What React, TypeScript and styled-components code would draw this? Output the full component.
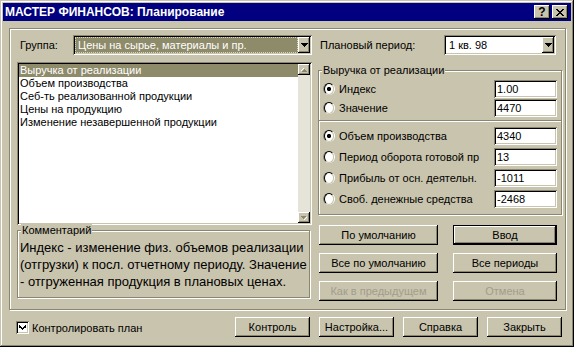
import React from 'react'
import styled, { createGlobalStyle, css } from 'styled-components'

const C = {
  face: '#c9c4ad',
  shadow: '#8a8672',
  white: '#ffffff',
  black: '#000000',
  select: '#8e8b6b',
  track: '#e6e3d9',
  disabled: '#a19d8c',
  title: '#000080',
}

const GlobalStyle = createGlobalStyle`
  html, body {
    margin: 0;
    padding: 0;
    background: ${C.face};
  }
  body {
    font-family: "Liberation Sans", Arial, sans-serif;
    font-size: 11px;
    color: #000;
  }
  * {
    box-sizing: border-box;
  }
`

const raised = css`
  background: ${C.face};
  box-shadow: inset -1px -1px ${C.black}, inset 1px 1px ${C.white},
    inset -2px -2px ${C.shadow}, inset 2px 2px ${C.face};
`

const sunken = css`
  box-shadow: inset 1px 1px ${C.shadow}, inset -1px -1px ${C.white},
    inset 2px 2px ${C.black}, inset -2px -2px ${C.face};
`

const etched = css`
  border: 1px solid ${C.shadow};
  box-shadow: inset 1px 1px ${C.white}, 1px 1px ${C.white};
`

const Dialog = styled.div`
  width: 574px;
  height: 347px;
  padding: 3px;
  background: ${C.face};
  box-shadow: inset -1px -1px ${C.black}, inset 1px 1px ${C.face},
    inset -2px -2px ${C.shadow}, inset 2px 2px ${C.white};
  display: flex;
  flex-direction: column;
`

const TitleBar = styled.div`
  height: 18px;
  display: flex;
  align-items: center;
  justify-content: space-between;
  padding: 0 3px 0 2px;
  background: ${C.title};
  color: #fff;
  font-size: 12px;
  font-weight: bold;
`

const TitleButtons = styled.div`
  display: flex;
  gap: 2px;
`

const TitleButton = styled.div`
  width: 16px;
  height: 14px;
  ${raised};
  display: flex;
  align-items: center;
  justify-content: center;
  color: #000;
  font-size: 12px;
  font-weight: bold;
  line-height: 14px;
`

const Frame = styled.div`
  margin: 7px 5px 0 6px;
  height: 282px;
  ${etched};
  padding: 6px 3px 0 7px;
  display: flex;
  gap: 6px;
`

const Column = styled.div<{ $width: number }>`
  width: ${(p) => p.$width}px;
  display: flex;
  flex-direction: column;
`

const FieldRow = styled.div`
  height: 20px;
  display: flex;
  align-items: center;
`

const FieldLabel = styled.span<{ $width: number; $pad: number }>`
  width: ${(p) => p.$width}px;
  padding-left: ${(p) => p.$pad}px;
  white-space: nowrap;
`

const ComboBox = styled.div<{ $width: number }>`
  width: ${(p) => p.$width}px;
  height: 20px;
  padding: 2px;
  background: ${C.white};
  ${sunken};
  display: flex;
`

const ComboText = styled.div<{ $selected?: boolean }>`
  flex: 1;
  display: flex;
  align-items: center;
  padding-left: 2px;
  white-space: nowrap;
  overflow: hidden;
  background: ${(p) => (p.$selected ? C.select : C.white)};
  color: ${(p) => (p.$selected ? C.white : C.black)};
  border: 1px dotted ${(p) => (p.$selected ? '#d8d4c2' : 'transparent')};
`

const DropButton = styled.div`
  width: 12px;
  ${raised};
  display: flex;
  align-items: center;
  justify-content: center;
`

const ListBox = styled.div`
  margin-top: 7px;
  height: 163px;
  padding: 2px;
  background: ${C.white};
  ${sunken};
  display: flex;
`

const ListItems = styled.div`
  flex: 1;
`

const ListItem = styled.div<{ $selected?: boolean }>`
  height: 13px;
  line-height: 13px;
  padding-left: 1px;
  white-space: nowrap;
  background: ${(p) => (p.$selected ? C.select : 'transparent')};
  color: ${(p) => (p.$selected ? C.white : C.black)};
`

const ScrollBar = styled.div`
  width: 12px;
  display: flex;
  flex-direction: column;
  justify-content: space-between;
  background: ${C.track};
`

const ScrollArrow = styled.div`
  height: 11px;
  ${raised};
  display: flex;
  align-items: center;
  justify-content: center;
`

const GroupBox = styled.div<{ $height: number; $width: number; $top: number }>`
  position: relative;
  margin-top: ${(p) => p.$top}px;
  width: ${(p) => p.$width}px;
  height: ${(p) => p.$height}px;
  ${etched};
`

const Legend = styled.span`
  position: absolute;
  top: -7px;
  left: 3px;
  padding: 0 1px;
  line-height: 13px;
  background: ${C.face};
  white-space: nowrap;
`

const GroupInner = styled.div`
  padding: 9px 4px 0 4px;
  display: flex;
  flex-direction: column;
`

const RadioList = styled.div<{ $gap: number }>`
  display: flex;
  flex-direction: column;
  gap: ${(p) => p.$gap}px;
`

const OptionRow = styled.div`
  height: 18px;
  display: flex;
  align-items: center;
`

const RadioMark = styled.span<{ $checked?: boolean }>`
  flex: none;
  width: 12px;
  height: 12px;
  border-radius: 50%;
  border: 1px solid;
  border-color: ${C.shadow} ${C.white} ${C.white} ${C.shadow};
  display: flex;
  align-items: center;
  justify-content: center;

  &::before {
    content: '';
    width: 10px;
    height: 10px;
    border-radius: 50%;
    border: 1px solid;
    border-color: ${C.black} ${C.face} ${C.face} ${C.black};
    background: ${(p) =>
      p.$checked
        ? `radial-gradient(circle, #000 0 1.8px, #fff 2.4px)`
        : '#fff'};
  }
`

const OptionLabel = styled.span`
  margin-left: 4px;
  white-space: nowrap;
`

const ValueField = styled.input`
  margin-left: auto;
  width: 63px;
  height: 18px;
  border: none;
  outline: none;
  padding: 0 0 0 3px;
  font: 11px "Liberation Sans", Arial, sans-serif;
  color: #000;
  background: ${C.white};
  ${sunken};
`

const Divider = styled.div`
  margin: 3px -4px 5px;
  height: 2px;
  border-top: 1px solid ${C.shadow};
  border-bottom: 1px solid ${C.white};
`

const CommentText = styled.div`
  padding: 8px 2px 0 2px;
  font-size: 13px;
  line-height: 17px;
  white-space: nowrap;
`

const ButtonGrid = styled.div`
  margin-top: 10px;
  padding-left: 1px;
  display: grid;
  grid-template-columns: 119px 104px;
  column-gap: 15px;
  row-gap: 8px;
`

const PushButton = styled.button<{ $default?: boolean; $width?: number }>`
  width: ${(p) => (p.$width ? `${p.$width}px` : 'auto')};
  height: 20px;
  border: none;
  padding: 0;
  font: 11px "Liberation Sans", Arial, sans-serif;
  color: #000;
  ${raised};
  ${(p) =>
    p.$default &&
    css`
      box-shadow: inset 0 0 0 1px ${C.black}, inset -2px -2px ${C.black},
        inset 2px 2px ${C.white}, inset -3px -3px ${C.shadow};
    `}

  &:disabled {
    color: ${C.disabled};
  }
`

const Footer = styled.div`
  margin-top: 7px;
  height: 21px;
  padding: 0 9px 0 13px;
  display: flex;
  align-items: center;
`

const CheckBox = styled.span`
  width: 13px;
  height: 13px;
  background: ${C.white};
  ${sunken};
  display: flex;
  align-items: center;
  justify-content: center;
`

const CheckLabel = styled.span`
  margin-left: 3px;
`

const FooterButtons = styled.div`
  margin-left: auto;
  display: flex;
  gap: 9px;
  height: 21px;
`

const DownTriangle = ({ color = '#000' }: { color?: string }) => (
  <svg width="7" height="4" viewBox="0 0 7 4" shapeRendering="crispEdges">
    <path d="M0 0h7v1H0zM1 1h5v1H1zM2 2h3v1H2zM3 3h1v1H3z" fill={color} />
  </svg>
)

const ScrollGlyph = ({ up }: { up?: boolean }) => (
  <svg width="6" height="4" viewBox="0 0 6 4" shapeRendering="crispEdges" style={{ transform: up ? 'rotate(180deg)' : undefined }}>
    <path d="M0 0h5v1H0zM1 1h3v1H1zM2 2h1v1H2z" fill={C.shadow} />
    <path d="M5 1h1v1H5zM4 2h1v1H4zM3 3h1v1H3z" fill={C.white} />
  </svg>
)

const listItems = [
  'Выручка от реализации',
  'Объем производства',
  'Себ-ть реализованной продукции',
  'Цены на продукцию',
  'Изменение незавершенной продукции',
]

const lowerOptions = [
  { label: 'Объем производства', value: '4340', checked: true },
  { label: 'Период оборота готовой пр', value: '13' },
  { label: 'Прибыль от осн. деятельн.', value: '-1011' },
  { label: 'Своб. денежные средства', value: '-2468' },
]

const App = () => {
  return (
    <>
      <GlobalStyle />
      <Dialog>
        <TitleBar>
          <span>МАСТЕР ФИНАНСОВ: Планирование</span>
          <TitleButtons>
            <TitleButton>?</TitleButton>
            <TitleButton>
              <svg width="8" height="7" viewBox="0 0 8 7" shapeRendering="crispEdges">
                <path
                  d="M0 0h2v1H0zM6 0h2v1H6zM1 1h2v1H1zM5 1h2v1H5zM2 2h4v1H2zM3 3h2v1H3zM2 4h4v1H2zM1 5h2v1H1zM5 5h2v1H5zM0 6h2v1H0zM6 6h2v1H6z"
                  fill="#000"
                />
              </svg>
            </TitleButton>
          </TitleButtons>
        </TitleBar>

        <Frame>
          <Column $width={295}>
            <FieldRow>
              <FieldLabel $width={56} $pad={3}>Группа:</FieldLabel>
              <ComboBox $width={239}>
                <ComboText $selected>Цены на сырье, материалы и пр.</ComboText>
                <DropButton>
                  <DownTriangle />
                </DropButton>
              </ComboBox>
            </FieldRow>

            <ListBox>
              <ListItems>
                {listItems.map((item, i) => (
                  <ListItem key={item} $selected={i === 0}>
                    {item}
                  </ListItem>
                ))}
              </ListItems>
              <ScrollBar>
                <ScrollArrow>
                  <ScrollGlyph up />
                </ScrollArrow>
                <ScrollArrow>
                  <ScrollGlyph />
                </ScrollArrow>
              </ScrollBar>
            </ListBox>

            <GroupBox $width={293} $height={68} $top={5}>
              <Legend>Комментарий</Legend>
              <CommentText>
                Индекс - изменение физ. объемов реализации
                <br />
                (отгрузки) к посл. отчетному периоду. Значение
                <br />- отгруженная продукция в плановых ценах.
              </CommentText>
            </GroupBox>
          </Column>

          <Column $width={244}>
            <FieldRow>
              <FieldLabel $width={126} $pad={2}>Плановый период:</FieldLabel>
              <ComboBox $width={112}>
                <ComboText>1 кв. 98</ComboText>
                <DropButton>
                  <DownTriangle />
                </DropButton>
              </ComboBox>
            </FieldRow>

            <GroupBox $width={244} $height={145} $top={15}>
              <Legend>Выручка от реализации</Legend>
              <GroupInner>
                <RadioList $gap={1}>
                  <OptionRow>
                    <RadioMark $checked />
                    <OptionLabel>Индекс</OptionLabel>
                    <ValueField readOnly value="1.00" />
                  </OptionRow>
                  <OptionRow>
                    <RadioMark />
                    <OptionLabel>Значение</OptionLabel>
                    <ValueField readOnly value="4470" />
                  </OptionRow>
                </RadioList>
                <Divider />
                <RadioList $gap={3}>
                  {lowerOptions.map((o) => (
                    <OptionRow key={o.label}>
                      <RadioMark $checked={o.checked} />
                      <OptionLabel>{o.label}</OptionLabel>
                      <ValueField readOnly value={o.value} />
                    </OptionRow>
                  ))}
                </RadioList>
              </GroupInner>
            </GroupBox>

            <ButtonGrid>
              <PushButton>По умолчанию</PushButton>
              <PushButton $default>Ввод</PushButton>
              <PushButton>Все по умолчанию</PushButton>
              <PushButton>Все периоды</PushButton>
              <PushButton disabled>Как в предыдущем</PushButton>
              <PushButton disabled>Отмена</PushButton>
            </ButtonGrid>
          </Column>
        </Frame>

        <Footer>
          <CheckBox>
            <svg width="7" height="7" viewBox="0 0 7 7" shapeRendering="crispEdges">
              <path d="M6 0h1v3H6zM5 1h1v3H5zM4 2h1v3H4zM3 3h1v3H3zM2 2h1v3H2zM1 1h1v3H1zM0 0h1v3H0z" fill="#000" transform="translate(0,1) scale(1,0.85)" />
            </svg>
          </CheckBox>
          <CheckLabel>Контролировать план</CheckLabel>
          <FooterButtons>
            <PushButton $width={75}>Контроль</PushButton>
            <PushButton $width={75}>Настройка...</PushButton>
            <PushButton $width={75}>Справка</PushButton>
            <PushButton $width={75}>Закрыть</PushButton>
          </FooterButtons>
        </Footer>
      </Dialog>
    </>
  )
}

export default App
